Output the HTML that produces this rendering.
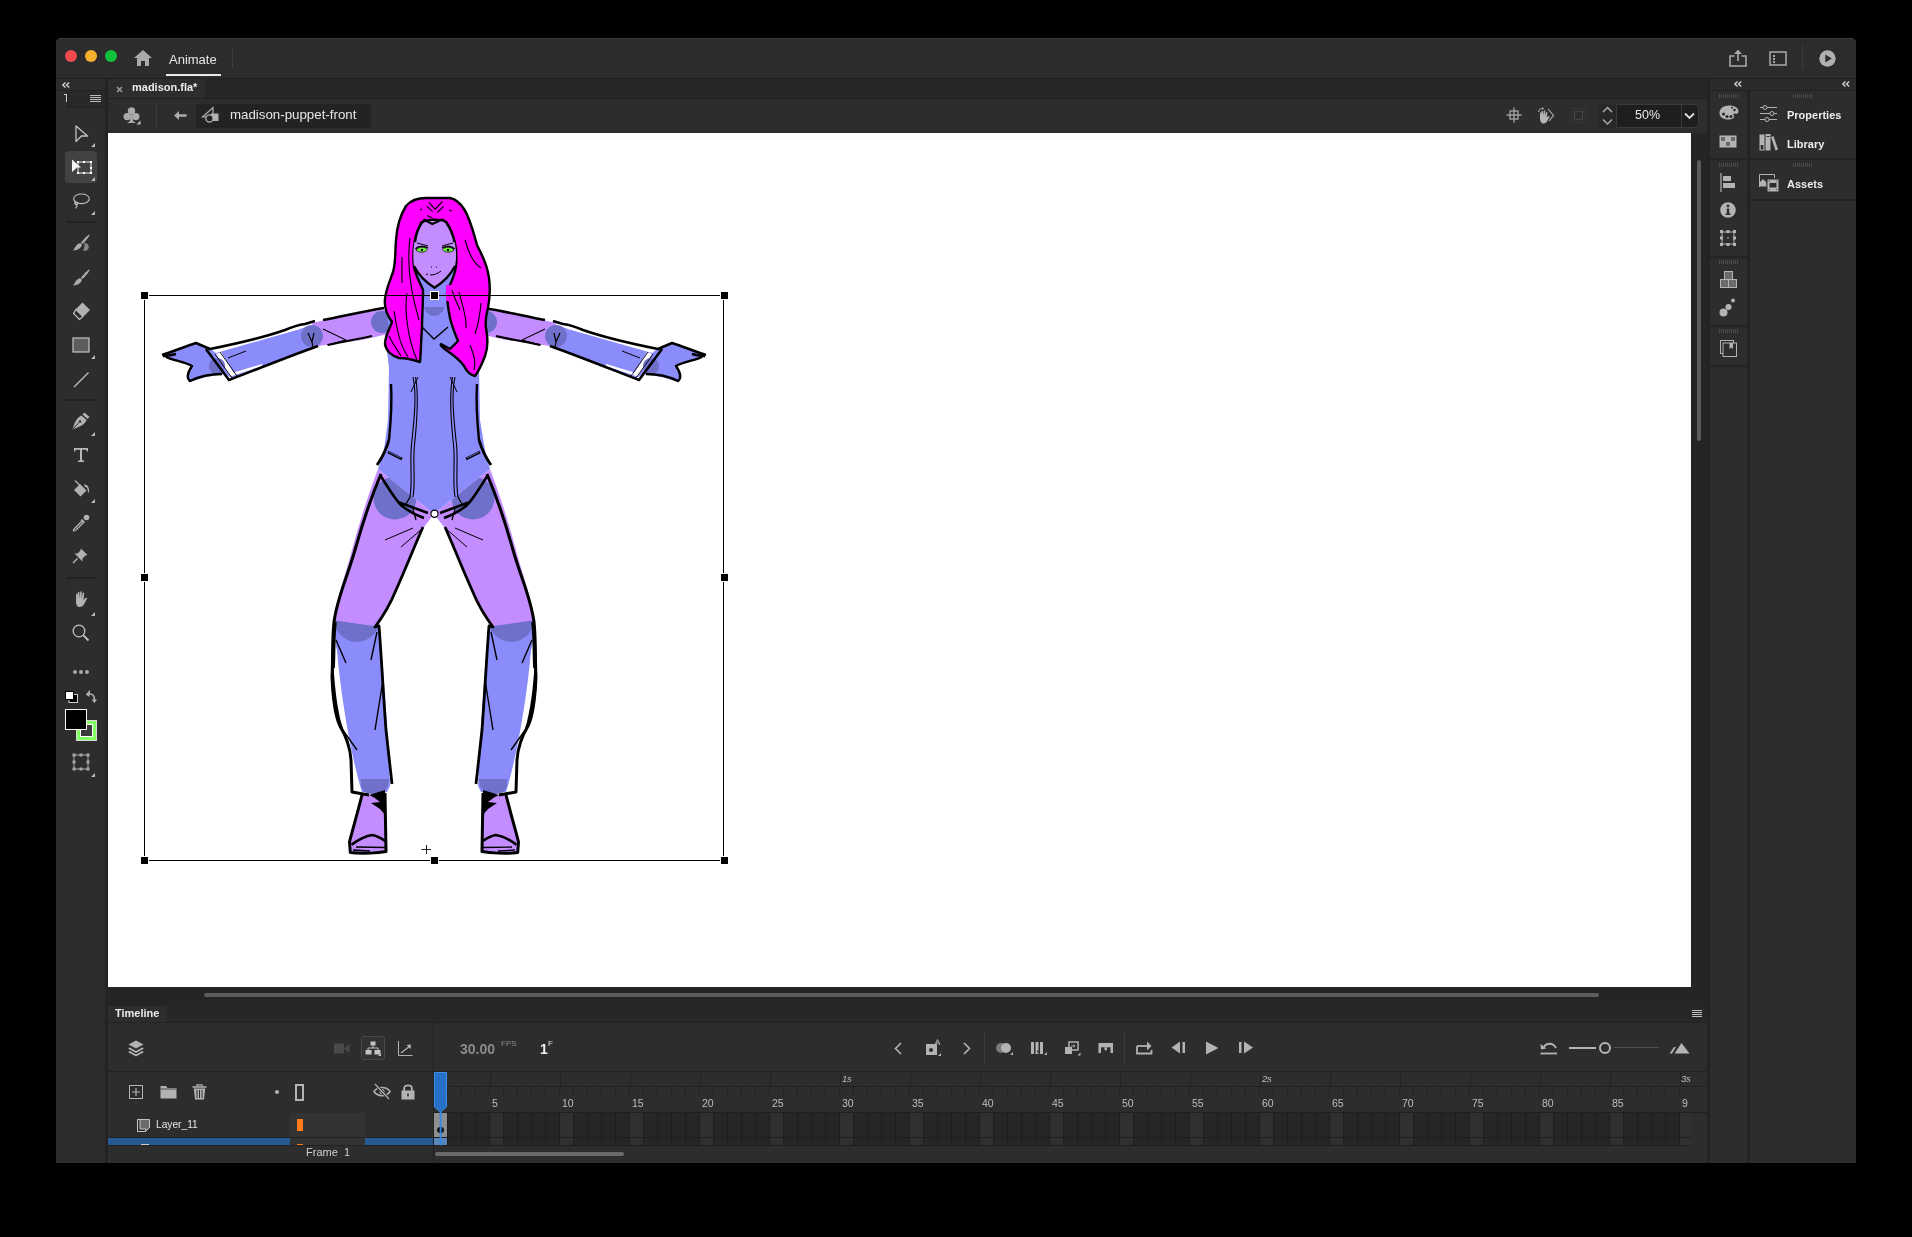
<!DOCTYPE html>
<html><head><meta charset="utf-8">
<style>
*{box-sizing:border-box;margin:0;padding:0}
html,body{width:1912px;height:1237px;background:#000;overflow:hidden;font-family:"Liberation Sans",sans-serif}
.a{position:absolute}
#win{position:absolute;left:56px;top:38px;width:1800px;height:1125px;background:#2d2d2d;border-radius:5px 5px 0 0;overflow:hidden;box-shadow:inset 0 1px 0 #3a3a3a}
.t{position:absolute;white-space:nowrap;line-height:1;will-change:transform}
svg{position:absolute;overflow:visible}
</style></head><body>
<div id="win">
  <!-- title bar -->
  <div class="a" style="left:0;top:1px;width:1800px;height:39px;background:#2c2c2c"></div>
  <div class="a" style="left:0;top:40px;width:1800px;height:1px;background:#1f1f1f"></div>
</div>
<!-- absolute layer in page coords -->
<div id="ui" class="a" style="left:0;top:0;width:1912px;height:1237px">
  <!-- traffic lights -->
  <div class="a" style="left:65px;top:50px;width:12px;height:12px;border-radius:50%;background:#ee4a4d"></div>
  <div class="a" style="left:85px;top:50px;width:12px;height:12px;border-radius:50%;background:#f5b02c"></div>
  <div class="a" style="left:105px;top:50px;width:12px;height:12px;border-radius:50%;background:#12c13b"></div>
  <!-- home -->
  <svg style="left:134px;top:50px" width="18" height="16" viewBox="0 0 18 16"><path d="M9 0 L18 8 L15 8 L15 16 L11 16 L11 11 L7 11 L7 16 L3 16 L3 8 L0 8 Z" fill="#a9a9a9"/></svg>
  <div class="t" style="left:169px;top:53px;font-size:13px;color:#e6e6e6">Animate</div>
  <div class="a" style="left:166px;top:74px;width:55px;height:2px;background:#e8e8e8"></div>
  <div class="a" style="left:232px;top:48px;width:1px;height:20px;background:#3e3e3e"></div>

  <!-- tools panel -->

  <!-- tools panel header -->
  <svg style="left:62px;top:82px" width="8" height="6" viewBox="0 0 8 6"><path d="M3.5 0.5 L0.8 3 L3.5 5.5 M7.2 0.5 L4.5 3 L7.2 5.5" stroke="#d6d6d6" stroke-width="1.3" fill="none"/></svg>
  <div class="a" style="left:56px;top:90px;width:49px;height:1px;background:#222"></div>
  <div class="a" style="left:67px;top:91px;width:38px;height:17px;background:#292929;border-left:1px solid #222;border-bottom:1px solid #222"></div>
  <div class="a" style="left:64px;top:94px;width:3px;height:1px;background:#d0d0d0"></div>
  <div class="a" style="left:66px;top:94px;width:1px;height:8px;background:#d0d0d0"></div>
  <svg style="left:90px;top:95px" width="11" height="8" viewBox="0 0 11 8"><path d="M0 0.5H11M0 2.5H11M0 4.5H11M0 6.5H11" stroke="#bdbdbd" stroke-width="1"/></svg>
  <!-- select tool -->
  <svg style="left:75px;top:125px" width="14" height="18" viewBox="0 0 14 18"><path d="M1 1 L12.5 11 L6.5 11 L1 16.5 Z" stroke="#c3c3c3" stroke-width="1.3" fill="none" stroke-linejoin="round"/></svg>
  <svg style="left:91px;top:143px" width="5" height="5" viewBox="0 0 5 5"><path d="M4 0 L4 4 L0 4 Z" fill="#bbb"/></svg>
  <!-- free transform selected -->
  <div class="a" style="left:65px;top:151px;width:32px;height:32px;background:#424242;border-radius:4px"></div>
  <svg style="left:71px;top:159px" width="22" height="16" viewBox="0 0 22 16"><path d="M7 3 H20 V14 H7 Z" stroke="#e8e8e8" stroke-width="1" fill="none"/><rect x="6" y="2" width="2" height="2" fill="#fff"/><rect x="12" y="2" width="2" height="2" fill="#fff"/><rect x="19" y="2" width="2" height="2" fill="#fff"/><rect x="19" y="8" width="2" height="2" fill="#fff"/><rect x="19" y="13" width="2" height="2" fill="#fff"/><rect x="12" y="13" width="2" height="2" fill="#fff"/><rect x="6" y="13" width="2" height="2" fill="#fff"/><path d="M1 0.5 L10 8.5 L6 8.5 L1 13 Z" fill="#f4f4f4"/></svg>
  <svg style="left:91px;top:177px" width="5" height="5" viewBox="0 0 5 5"><path d="M4 0 L4 4 L0 4 Z" fill="#bbb"/></svg>
  <!-- lasso -->
  <svg style="left:72px;top:193px" width="18" height="17" viewBox="0 0 18 17"><ellipse cx="9.5" cy="5.8" rx="7.8" ry="4.8" stroke="#c0c0c0" stroke-width="1.1" fill="none"/><path d="M4 8 C2 9 2.5 12 5 11.5 C6.5 11 6 9 4.5 9.5 C3.5 10 4 12 5 13 L3.5 15.5" stroke="#c0c0c0" stroke-width="1.1" fill="none"/></svg>
  <svg style="left:91px;top:211px" width="5" height="5" viewBox="0 0 5 5"><path d="M4 0 L4 4 L0 4 Z" fill="#bbb"/></svg>
  <div class="a" style="left:66px;top:221px;width:30px;height:2px;background:#212121"></div>
  <!-- brush with fill -->
  <svg style="left:73px;top:234px" width="18" height="18" viewBox="0 0 18 18"><path d="M16.5 0.5 C17.5 1 12 8 9.5 10 L8 8.5 C10 6 15.5 0 16.5 0.5Z" fill="#ababab"/><path d="M7.3 9 L9 10.8 C8 14 5 16.5 0 16.5 C2 15 2 10.5 7.3 9Z" fill="#ababab"/><path d="M11 9 A4 4 0 1 1 10 16.5 C11.5 14 12 11 11 9Z" fill="#858585"/></svg>
  <!-- paint brush -->
  <svg style="left:73px;top:269px" width="18" height="17" viewBox="0 0 18 17"><path d="M16.5 0.5 C17.5 1 12 8 9.5 10 L8 8.5 C10 6 15.5 0 16.5 0.5Z" fill="#ababab"/><path d="M7.3 9 L9 10.8 C8 14 5 16.5 0 16.5 C2 15 2 10.5 7.3 9Z" fill="#ababab"/></svg>
  <!-- eraser -->
  <svg style="left:73px;top:302px" width="18" height="18" viewBox="0 0 18 18"><path d="M9.5 0.5 L17 8 L10.5 14.5 L3 7 Z" fill="#b1b1b1"/><path d="M3 7.5 L10 14.5 L6.5 17.5 L0.5 11.5 Z" stroke="#c8c8c8" stroke-width="1.1" fill="none"/></svg>
  <!-- rectangle -->
  <svg style="left:72px;top:337px" width="18" height="16" viewBox="0 0 18 16"><rect x="1" y="1" width="16" height="14" fill="#5d5d5d" stroke="#c4c4c4" stroke-width="1.2"/></svg>
  <svg style="left:91px;top:355px" width="5" height="5" viewBox="0 0 5 5"><path d="M4 0 L4 4 L0 4 Z" fill="#bbb"/></svg>
  <!-- line -->
  <svg style="left:73px;top:371px" width="17" height="17" viewBox="0 0 17 17"><path d="M1 16 L15.5 1.5" stroke="#b8b8b8" stroke-width="1.4"/></svg>
  <div class="a" style="left:66px;top:399px;width:30px;height:2px;background:#212121"></div>
  <!-- pen -->
  <svg style="left:72px;top:412px" width="18" height="18" viewBox="0 0 18 18"><path d="M12.5 0.5 L17.5 5 L15.5 7 L10.5 2.5Z" fill="#b1b1b1"/><path d="M9.5 3.5 L14.5 8 C13 12 10 14 0.5 17.5 C3 8.5 5.5 5.5 9.5 3.5Z" fill="#b1b1b1"/><path d="M1 17 L7 10.5" stroke="#2d2d2d" stroke-width="1"/><circle cx="8" cy="9.5" r="1.2" fill="#2d2d2d"/></svg>
  <svg style="left:91px;top:432px" width="5" height="5" viewBox="0 0 5 5"><path d="M4 0 L4 4 L0 4 Z" fill="#bbb"/></svg>
  <!-- text -->
  <svg style="left:73px;top:447px" width="16" height="16" viewBox="0 0 16 16"><path d="M1 1 H15 V4.5 H13.5 V2.7 H9 V13.5 H11 V15 H5 V13.5 H7 V2.7 H2.5 V4.5 H1 Z" fill="#b8b8b8"/></svg>
  <!-- bucket -->
  <svg style="left:72px;top:480px" width="19" height="18" viewBox="0 0 19 18"><path d="M8 4 L14.5 10.5 L8.5 16.5 L2 10 Z" fill="#b1b1b1"/><path d="M3 0.5 L9 6.5" stroke="#b1b1b1" stroke-width="1.2"/><path d="M12 4.5 C16 4 17.5 8 17 12.5 L16 12.5 C16 9 15 7 13 7" fill="#b1b1b1"/></svg>
  <svg style="left:91px;top:499px" width="5" height="5" viewBox="0 0 5 5"><path d="M4 0 L4 4 L0 4 Z" fill="#bbb"/></svg>
  <!-- eyedropper -->
  <svg style="left:72px;top:514px" width="18" height="18" viewBox="0 0 18 18"><circle cx="14.5" cy="3.5" r="2.8" fill="#b1b1b1"/><path d="M10 5 L13 8 L11.5 9.5 L8.5 6.5Z" fill="#b1b1b1"/><path d="M9.5 7.5 L3 14 C1.5 15.5 1 16.8 1.8 17 C2.5 17.3 3.6 16.5 4.5 15.5 L11 9" stroke="#c0c0c0" stroke-width="1.1" fill="none"/></svg>
  <!-- pin -->
  <svg style="left:72px;top:548px" width="16" height="16" viewBox="0 0 16 16"><path d="M9 0.5 L15.5 7 L13.5 7.5 L10.5 10.5 L10.5 13.5 L2.5 5.5 L5.5 5.5 L8.5 2.5 Z" fill="#b1b1b1"/><path d="M1 15 L5.5 10.5" stroke="#b1b1b1" stroke-width="1.5"/></svg>
  <div class="a" style="left:66px;top:577px;width:30px;height:2px;background:#212121"></div>
  <!-- hand -->
  <svg style="left:72px;top:591px" width="17" height="17" viewBox="0 0 17 17"><path d="M4 9 L4 3.5 C4 2.5 5.5 2.5 5.5 3.5 L5.5 7.5 L5.8 1.5 C5.8 0.4 7.4 0.4 7.4 1.5 L7.6 7.3 L8.2 1 C8.3 -0.1 9.9 0 9.8 1.1 L9.6 7.4 L10.6 2.3 C10.9 1.2 12.3 1.5 12.2 2.6 L11.5 9.3 C12.5 8 13.5 6.5 14.5 6.8 C15.5 7.2 15 8 14.2 9.2 C12.5 12 11.5 16 7.5 16 C4.5 16 4 13 4 9Z" fill="#b1b1b1"/></svg>
  <svg style="left:91px;top:612px" width="5" height="5" viewBox="0 0 5 5"><path d="M4 0 L4 4 L0 4 Z" fill="#bbb"/></svg>
  <!-- zoom -->
  <svg style="left:72px;top:624px" width="18" height="18" viewBox="0 0 18 18"><circle cx="7" cy="7" r="5.8" stroke="#c0c0c0" stroke-width="1.3" fill="none"/><path d="M11.2 11.2 L16.5 16.5" stroke="#c0c0c0" stroke-width="1.8"/></svg>
  <!-- more -->
  <svg style="left:72px;top:669px" width="18" height="6" viewBox="0 0 18 6"><circle cx="3" cy="3" r="2" fill="#a8a8a8"/><circle cx="9" cy="3" r="2" fill="#a8a8a8"/><circle cx="15" cy="3" r="2" fill="#a8a8a8"/></svg>
  <!-- default colors / swap -->
  <svg style="left:65px;top:691px" width="13" height="12" viewBox="0 0 13 12"><rect x="0.5" y="0.5" width="8" height="8" fill="#fff" stroke="#bbb" stroke-width="1"/><rect x="4" y="3.5" width="8.5" height="8" fill="#000" stroke="#ccc" stroke-width="1"/><rect x="0.5" y="0.5" width="8" height="8" fill="#fff" stroke="#000" stroke-width="1"/></svg>
  <svg style="left:85px;top:691px" width="12" height="13" viewBox="0 0 12 13"><path d="M1.5 4 L4 1 L4 2.8 C8 2.8 9.5 5 9.5 9" stroke="#b1b1b1" stroke-width="1.6" fill="none"/><path d="M1 3.5 L4.5 0.5 L4.5 6Z" fill="#b1b1b1"/><path d="M6.5 8.5 L9.5 12 L12 8.5Z" fill="#b1b1b1"/></svg>
  <!-- fill & stroke -->
  <div class="a" style="left:76px;top:720px;width:21px;height:21px;background:#84ff62;border:1px solid #d8d8d8"></div>
  <div class="a" style="left:80px;top:724px;width:13px;height:13px;background:#3a3a3a;border:1px solid #fff"></div>
  <div class="a" style="left:65px;top:709px;width:22px;height:21px;background:#000;border:1.5px solid #f5f5f5"></div>
  <!-- transform dots -->
  <svg style="left:72px;top:753px" width="18" height="18" viewBox="0 0 18 18"><rect x="2" y="2" width="14" height="14" fill="none" stroke="#a8a8a8" stroke-width="1"/><g fill="#a8a8a8"><rect x="0.5" y="0.5" width="3" height="3"/><rect x="7.5" y="0.5" width="3" height="3"/><rect x="14.5" y="0.5" width="3" height="3"/><rect x="0.5" y="7.5" width="3" height="3"/><rect x="14.5" y="7.5" width="3" height="3"/><rect x="0.5" y="14.5" width="3" height="3"/><rect x="7.5" y="14.5" width="3" height="3"/><rect x="14.5" y="14.5" width="3" height="3"/></g></svg>
  <svg style="left:91px;top:773px" width="5" height="5" viewBox="0 0 5 5"><path d="M4 0 L4 4 L0 4 Z" fill="#bbb"/></svg>
  <div class="a" style="left:105px;top:79px;width:3px;height:1084px;background:#232323"></div>

  <!-- doc tab bar -->
  <div class="a" style="left:108px;top:79px;width:1599px;height:19px;background:#262626"></div>
  <div class="a" style="left:108px;top:79px;width:97px;height:19px;background:#2d2d2d"></div>
  <!-- breadcrumb bar -->
  <div class="a" style="left:108px;top:98px;width:1599px;height:35px;background:#2d2d2d"></div>
  <!-- pasteboard -->
  <div class="a" style="left:108px;top:133px;width:1601px;height:873px;background:#252525"></div>
  <div class="a" style="left:108px;top:133px;width:1583px;height:854px;background:#fff"></div>

  <!-- doc tab -->
  <div class="a" style="left:108px;top:98px;width:1599px;height:1px;background:#1f1f1f"></div>
  <svg style="left:116px;top:86px" width="7" height="7" viewBox="0 0 7 7"><path d="M1 1 L6 6 M6 1 L1 6" stroke="#9a9a9a" stroke-width="1.6"/></svg>
  <div class="t" style="left:132px;top:82px;font-size:11px;font-weight:bold;color:#ececec">madison.fla*</div>
  <!-- breadcrumb -->
  <svg style="left:123px;top:107px" width="19" height="18" viewBox="0 0 19 18"><circle cx="8.5" cy="4" r="3.7" fill="#ababab"/><circle cx="4.2" cy="9.6" r="3.7" fill="#ababab"/><circle cx="12.8" cy="9.6" r="3.7" fill="#ababab"/><path d="M7.5 8 L9.5 8 L10 14 L13 16 L4 16 L7 14Z" fill="#ababab"/><path d="M17.5 13.5 L17.5 17.5 L13.5 17.5Z" fill="#bbb"/></svg>
  <div class="a" style="left:156px;top:105px;width:1px;height:22px;background:#3d3d3d"></div>
  <svg style="left:174px;top:111px" width="13" height="9" viewBox="0 0 13 9"><path d="M0 4.5 L5 0 L5 3.3 L12.5 3.3 L12.5 5.7 L5 5.7 L5 9Z" fill="#adadad"/></svg>
  <div class="a" style="left:196px;top:104px;width:175px;height:24px;background:#232323;border-radius:3px"></div>
  <svg style="left:202px;top:107px" width="17" height="17" viewBox="0 0 17 17"><path d="M11 0.5 L11 10 L0.5 10 Z" fill="none" stroke="#b3b3b3" stroke-width="1.2"/><rect x="9" y="6.5" width="7.5" height="7.5" fill="#b3b3b3"/><circle cx="7.5" cy="11.5" r="3.6" fill="#232323" stroke="#b3b3b3" stroke-width="1.3"/></svg>
  <div class="t" style="left:230px;top:108px;font-size:13.3px;color:#e6e6e6">madison-puppet-front</div>
  <!-- stage view controls -->
  <svg style="left:1506px;top:107px" width="16" height="16" viewBox="0 0 16 16"><path d="M8 0.5 V15.5 M0.5 8 H15.5" stroke="#a0a0a0" stroke-width="1.4"/><rect x="4" y="4" width="8" height="8" fill="none" stroke="#a0a0a0" stroke-width="1.4"/></svg>
  <svg style="left:1537px;top:107px" width="19" height="18" viewBox="0 0 19 18"><path d="M3 10 L3 6 C3 5 4.3 5 4.3 6 L4.3 8.5 L4.6 4.5 C4.6 3.5 6 3.5 6 4.5 L6.2 8.5 L6.8 4 C6.9 3 8.3 3.1 8.2 4.1 L8 8.6 L9 5.5 C9.3 4.6 10.5 4.9 10.4 5.8 L9.8 10.8 C10.6 9.8 11.5 8.8 12.3 9.1 C13 9.4 12.7 10 12 11 C10.7 13 9.8 16.5 6.5 16.5 C3.8 16.5 3 14 3 10Z" fill="#b5b5b5"/><path d="M11 2 L16.5 8.5 L12 14" stroke="#b5b5b5" stroke-width="1.1" fill="none"/><path d="M1.5 5 C2 2 4 1 6 1.5" stroke="#b5b5b5" stroke-width="1" fill="none"/><path d="M5.5 0 L7 1.7 L5 2.8Z" fill="#b5b5b5"/></svg>
  <svg style="left:1571px;top:108px" width="15" height="15" viewBox="0 0 15 15"><rect x="0.5" y="0.5" width="14" height="14" fill="none" stroke="#3e3e3e" stroke-width="1" stroke-dasharray="1 1"/><rect x="3.5" y="3.5" width="8" height="8" fill="none" stroke="#444" stroke-width="1.2"/></svg>
  <div class="a" style="left:1599px;top:104px;width:18px;height:24px;background:#282828;border-radius:3px 0 0 3px"></div>
  <svg style="left:1602px;top:106px" width="11" height="20" viewBox="0 0 11 20"><path d="M1 6 L5.5 1.5 L10 6 M1 13.5 L5.5 18 L10 13.5" stroke="#a9a9a9" stroke-width="1.5" fill="none"/></svg>
  <div class="a" style="left:1616px;top:104px;width:83px;height:24px;background:#1e1e1e;border:1px solid #3b3b3b;border-radius:0 4px 4px 0"></div>
  <div class="a" style="left:1681px;top:105px;width:1px;height:22px;background:#3b3b3b"></div>
  <div class="t" style="left:1635px;top:109px;font-size:12.5px;color:#e8e8e8">50%</div>
  <svg style="left:1684px;top:112px" width="11" height="8" viewBox="0 0 11 8"><path d="M1 1.5 L5.5 6 L10 1.5" stroke="#e0e0e0" stroke-width="1.8" fill="none"/></svg>
  <!-- stage scrollbars -->
  <div class="a" style="left:1697px;top:160px;width:4px;height:281px;background:#5c5c5c;border-radius:2px"></div>
  <div class="a" style="left:204px;top:993px;width:1395px;height:4px;background:#5c5c5c;border-radius:2px"></div>
<!--CHAR-->
<svg style="left:0;top:0" width="1912" height="1237" viewBox="0 0 1912 1237">
<path d="M414,250 L458,250 L456,300 L470,306 L484,309 L483,334 L479,368 L480,420 L485,450 L490,469 L434,514 L378,469 L384,450 L388,420 L389,368 L385,334 L385,309 L398,306 L414,300 Z" fill="#8a8cfb"/>
<g id="lf"><path d="M162,355 L180,348 L196,343 L209,350 L222,350 L300,329 L314,324 L320,346 L268,364 L232,378 L224,374 L206,377 L190,382 L188,376 L193,366 L176,360 L166,357 Z" fill="#8a8cfb"/><path d="M312,323 L343,316 L386,309 L388,334 L362,340 L318,346 Z" fill="#c48dff"/><path d="M212,350 L300,326 L300,329 L216,353 Z" fill="#fff"/><path d="M232,376 L262,366 L262,364 L232,373 Z" fill="#fff"/><path d="M216,354 L230,376 L235,375 L221,352 Z" fill="#fff"/><path d="M378,469 C370,490 360,520 352,550 C344,580 336,600 333,622 L377,628 C385,612 392,600 398,585 C408,560 418,535 424,527 L434,514 Z" fill="#c48dff"/><path d="M335,622 L379,626 C383,660 387,720 390,786 L387,792 L361,792 C352,760 340,700 336,660 Z" fill="#8a8cfb"/><path d="M334,640 L337,690 L352,760 L358,792 L362,792 C352,760 341,700 337,650 Z" fill="#fff"/><path d="M361,795 L384,795 L386,851 L349,853 C350,840 355,815 361,795 Z" fill="#c48dff"/></g><use href="#lf" transform="translate(868,0) scale(-1,1)"/>
<g id="ls"><clipPath id="armclip"><path d="M160,355 L196,342 L222,349 L314,323 L386,308 L390,335 L362,341 L232,377 L188,383 Z"/></clipPath><g clip-path="url(#armclip)"><circle cx="312" cy="336" r="11" fill="#6f70c9"/><circle cx="382" cy="322" r="11" fill="#6f70c9"/><circle cx="217" cy="366" r="8" fill="#6f70c9"/></g><clipPath id="hipclip"><path d="M378,469 L434,514 L420,540 L360,540 L360,470 Z"/></clipPath><g clip-path="url(#hipclip)"><circle cx="395" cy="498" r="21.5" fill="#6f70c9"/></g><path d="M333,620 L379,627 C372,640 360,644 350,641 C340,637 335,630 333,620 Z" fill="#6f70c9"/><path d="M360.7,779 L389.5,779 L387.5,787 C384,792 378,794 372,794 C366,794 362,791 361,786 Z" fill="#6f70c9"/></g><use href="#ls" transform="translate(868,0) scale(-1,1)"/>
<path d="M424,307 C428,319 440,319 445,307 Z" fill="#6f70c9"/>
<g id="ll"><path d="M162,355 C172,352 186,346 196,343 L210,349 C235,344 262,338 285,330 C292,327 298,325 305,324 L315,321 M323,320 C340,317 360,312 384,308" stroke="#000" stroke-width="2.6" fill="none" stroke-linejoin="round"/><path d="M163,356 C168,356 172,355 176,354 M166,357 C172,360 185,362 192,366 C188,372 186,378 190,381 C198,377 210,374 222,374" stroke="#000" stroke-width="2.4" fill="none" stroke-linejoin="round"/><path d="M206,349 L229,380 C255,370 290,356 318,346" stroke="#000" stroke-width="2.6" fill="none" stroke-linejoin="round"/><path d="M328,345 C345,341 360,339 372,336" stroke="#000" stroke-width="2.2" fill="none"/><path d="M215,354 L232,378 M220,352 L237,376" stroke="#000" stroke-width="0.9" fill="none"/><path d="M228,358 L246,351" stroke="#000" stroke-width="1" fill="none"/><path d="M308,333 L312,342 L314,333 M312,342 L313,347" stroke="#000" stroke-width="1.2" fill="none"/><path d="M323,329 L346,340 L327,345" stroke="#000" stroke-width="1.1" fill="none"/><path d="M381,474 C372,495 362,525 355,550 C347,578 337,598 334,622 C332,640 333,660 332,677 C333,700 336,718 340,726 C346,736 350,745 351,760 L352,792 L369,795" stroke="#000" stroke-width="3" fill="none" stroke-linejoin="round"/><path d="M333,660 L331,680 C332,700 335,716 339,724 L346,738 L341,722 C337,705 335,690 333,660 Z" fill="#000"/><path d="M335,622 C333,640 334,655 333,668" stroke="#000" stroke-width="3.6" fill="none"/><path d="M423,527 C415,545 405,570 396,590 C390,605 384,615 375,627 L379,626 C381,650 383,690 386,730 L392,784" stroke="#000" stroke-width="2.8" fill="none" stroke-linejoin="round"/><path d="M336,640 L346,663 M340,726 L357,750 M377,632 L371,660 M383,680 L375,730" stroke="#000" stroke-width="1.4" fill="none"/><path d="M362,795 C357,815 351,835 349.5,842 L350.3,852.5 C362,854 378,853 386,851.5 L385,793" stroke="#000" stroke-width="3" fill="none" stroke-linejoin="round"/><path d="M369,795 L385,790 L386,816 L380,809 L371,803 L380,802 L374,797.5 Z" fill="#000"/><path d="M351.6,844.6 C358,840 365,836 372.3,835 C378,836 382,839 385.2,841" stroke="#000" stroke-width="2.6" fill="none"/><path d="M356,847 L385,847.5 M353,850 L370,851" stroke="#000" stroke-width="1.3" fill="none"/><path d="M385,540 L413,528 M401,547 L423,528" stroke="#000" stroke-width="1" fill="none"/><path d="M389,440 C386,450 382,458 377,465" stroke="#000" stroke-width="2.8" fill="none"/><path d="M391,384 C392,400 391,420 389,440" stroke="#000" stroke-width="2.4" fill="none"/><path d="M388,452 L402,459" stroke="#000" stroke-width="2.6" fill="none"/><path d="M389,452 L401,458" stroke="#8a8cfb" stroke-width="0.7" fill="none"/><path d="M413,377 C417,395 414,420 412,440 C409,460 413,480 410,497 M415.5,377 C419,395 417,420 415,440 C412,460 416,480 413,497" stroke="#000" stroke-width="1.1" fill="none"/><path d="M418,377 L411,392" stroke="#000" stroke-width="1" fill="none"/><path d="M380,475 C388,487 395,500 402,506 C410,512 418,516 424,518 M398,502 L428,513" stroke="#000" stroke-width="2.6" fill="none"/><path d="M410,497 L406,504 M413,509 L416,520" stroke="#000" stroke-width="1.3" fill="none"/></g><use href="#ll" transform="translate(868,0) scale(-1,1)"/>
<path d="M421,326 L434,339 L448,327" stroke="#000" stroke-width="1.4" fill="none"/>
<path d="M399,358 C392,356 386,351 385,344 C385,336 390,328 392,322 C387,315 384,307 385,299 C386,289 390,281 393,272 C396,262 395,250 396,240 C397,226 401,214 406,206 C411,200 418,198 426,198 L450,198 C456,199 460,203 464,209 C469,217 473,230 477,245 C481,254 487,262 489,278 C491,292 489,302 488,308 C486,316 485,322 486,328 C488,338 488,348 485,356 C482,364 478,372 475,376 C470,375 466,370 464,366 C460,360 452,354 446,350 C442,347 440,345 441,344 L450,349 L458,341 C455,334 452,326 450,318 C448,308 447,300 447,292 C450,284 455,276 456,266 C457,254 456,246 454,240 C452,232 449,226 446,222 C440,219 430,219 423,222 C419,228 416,234 415,240 C413,250 413,258 414,267 C416,277 421,284 423,290 C423,305 422,318 422,328 C421,340 421,352 420,362 C414,360 406,358 399,358 Z" fill="#ff00ff" stroke="#000" stroke-width="2.4" stroke-linejoin="round"/>
<path d="M423,223 C428,221 440,221 446,222 C450,228 453,234 454,240 C456,248 457,256 455,266 C450,276 443,282 434.5,287 C426,282 419,276 414,267 C413,256 413,248 415,240 C417,234 419,228 423,223 Z" fill="#c48dff"/>
<path d="M414,266 C419,276 427,283 434.5,287.8 C442,283 450,276 455,266" stroke="#000" stroke-width="2.4" fill="none"/>
<path d="M420,224 L424.7,220 L432.3,224 L442,219.5 L446,222 M422,222 C418,228 416,234 415,242 M446,222 C450,228 453,234 454.5,242" stroke="#000" stroke-width="2.4" fill="none"/>
<path d="M416,250 C418,247 425,246 427.5,249.5 C425,253 419,253 416,250 Z" fill="#6dfa3c" stroke="#000" stroke-width="0.7"/>
<path d="M454,250 C452,247 445,246 442.5,249.5 C445,253 451,253 454,250 Z" fill="#6dfa3c" stroke="#000" stroke-width="0.7"/>
<circle cx="422" cy="250" r="1.2" fill="#000"/><circle cx="448" cy="250" r="1.2" fill="#000"/>
<path d="M415.5,249 C418,246 424,245.5 428,248 M454.5,249 C452,246 446,245.5 442,248" stroke="#000" stroke-width="1.3" fill="none"/>
<path d="M417,243 L428,246 M442,246 L453,243" stroke="#000" stroke-width="1" fill="none"/>
<path d="M426,274.5 L428,274 M430,275 C434,275 437,274 441,271 M431,267 L432,267 M436,267 L437,267" stroke="#000" stroke-width="1" fill="none"/>
<path d="M402,257 L402,283 M410,238 C407,260 410,290 419,320 M394,311 C397,330 400,345 408,357 M407,293 C404,310 408,340 417,360 M465,240 C470,258 476,265 481,268 M459,292 C463,308 467,318 466,328 M481,303 C480,315 478,325 475,334 M428.7,202.3 L435.2,209.2 L442.5,201.5 M426.8,206.3 L432.7,211.7 M443.6,206.3 L437.4,212.5 M427.2,215.4 L432.7,218.3 M420,209 L422,210 M449,210 L452,211 M452,290 C455,300 458,305 460,310 M389,336 C393,344 397,350 401,356 M470,345 C474,355 476,362 474,370" stroke="#000" stroke-width="1.1" fill="none"/>
<path d="M446,285 L451,285 L451,301 L446,301 Z" fill="#ff00ff"/>
<path d="M148,295.5 H430 M438,295.5 H720 M144.5,299 V573 M144.5,581 V856 M723.5,299 V573 M723.5,581 V856 M148,860.5 H430 M438,860.5 H720" stroke="#000" stroke-width="1"/>
<rect x="140" y="291" width="9" height="9" fill="#fff"/><rect x="141" y="292" width="7" height="7" fill="#000"/>
<rect x="430" y="291" width="9" height="9" fill="#fff"/><rect x="431" y="292" width="7" height="7" fill="#000"/>
<rect x="720" y="291" width="9" height="9" fill="#fff"/><rect x="721" y="292" width="7" height="7" fill="#000"/>
<rect x="140" y="573" width="9" height="9" fill="#fff"/><rect x="141" y="574" width="7" height="7" fill="#000"/>
<rect x="720" y="573" width="9" height="9" fill="#fff"/><rect x="721" y="574" width="7" height="7" fill="#000"/>
<rect x="140" y="856" width="9" height="9" fill="#fff"/><rect x="141" y="857" width="7" height="7" fill="#000"/>
<rect x="430" y="856" width="9" height="9" fill="#fff"/><rect x="431" y="857" width="7" height="7" fill="#000"/>
<rect x="720" y="856" width="9" height="9" fill="#fff"/><rect x="721" y="857" width="7" height="7" fill="#000"/>
<circle cx="434.5" cy="513.8" r="3.6" fill="#fff" stroke="#000" stroke-width="1.2"/>
<path d="M421.5,849.5 H431 M426.5,845 V854" stroke="#222" stroke-width="1"/>
</svg>
<!--/CHAR-->
  <!-- right separator -->
  <div class="a" style="left:1707px;top:79px;width:3px;height:1084px;background:#232323"></div>
  <div class="a" style="left:1747px;top:79px;width:3px;height:1084px;background:#232323"></div>


  <!-- title right icons -->
  <svg style="left:1729px;top:49px" width="18" height="18" viewBox="0 0 18 18"><path d="M5.5 7 H1 V17 H17 V7 H12.5" stroke="#a9a9a9" stroke-width="1.6" fill="none"/><path d="M9 1.5 V12" stroke="#a9a9a9" stroke-width="1.6"/><path d="M5 5 L9 0.8 L13 5Z" fill="#a9a9a9"/></svg>
  <svg style="left:1769px;top:51px" width="18" height="15" viewBox="0 0 18 15"><rect x="1" y="1" width="16" height="13" fill="none" stroke="#a9a9a9" stroke-width="1.5"/><rect x="4" y="4" width="2" height="2" fill="#a9a9a9"/><rect x="4" y="7" width="2" height="2" fill="#a9a9a9"/><rect x="4" y="10" width="2" height="2" fill="#a9a9a9"/></svg>
  <div class="a" style="left:1802px;top:45px;width:1px;height:24px;background:#3c3c3c"></div>
  <svg style="left:1819px;top:50px" width="17" height="17" viewBox="0 0 17 17"><circle cx="8.5" cy="8.5" r="8.2" fill="#b0b0b0"/><path d="M6.3 4.5 L12.8 8.5 L6.3 12.5Z" fill="#2c2c2c"/></svg>
  <!-- right dock -->
  <div class="a" style="left:1710px;top:79px;width:146px;height:12px;background:#2b2b2b"></div>
  <div class="a" style="left:1710px;top:90px;width:146px;height:1px;background:#222"></div>
  <svg style="left:1734px;top:81px" width="8" height="6" viewBox="0 0 8 6"><path d="M3.5 0.5 L0.8 3 L3.5 5.5 M7.2 0.5 L4.5 3 L7.2 5.5" stroke="#d6d6d6" stroke-width="1.3" fill="none"/></svg>
  <svg style="left:1842px;top:81px" width="8" height="6" viewBox="0 0 8 6"><path d="M3.5 0.5 L0.8 3 L3.5 5.5 M7.2 0.5 L4.5 3 L7.2 5.5" stroke="#d6d6d6" stroke-width="1.3" fill="none"/></svg>
  <!-- grips -->
  <svg style="left:1719px;top:94px" width="20" height="4" viewBox="0 0 20 4"><path d="M0.5 0V4M2.5 0V4M4.5 0V4M6.5 0V4M8.5 0V4M10.5 0V4M12.5 0V4M14.5 0V4M16.5 0V4M18.5 0V4" stroke="#4a4a4a" stroke-width="1"/></svg>
  <svg style="left:1793px;top:94px" width="20" height="4" viewBox="0 0 20 4"><path d="M0.5 0V4M2.5 0V4M4.5 0V4M6.5 0V4M8.5 0V4M10.5 0V4M12.5 0V4M14.5 0V4M16.5 0V4M18.5 0V4" stroke="#4a4a4a" stroke-width="1"/></svg>
  <svg style="left:1719px;top:163px" width="20" height="4" viewBox="0 0 20 4"><path d="M0.5 0V4M2.5 0V4M4.5 0V4M6.5 0V4M8.5 0V4M10.5 0V4M12.5 0V4M14.5 0V4M16.5 0V4M18.5 0V4" stroke="#4a4a4a" stroke-width="1"/></svg>
  <svg style="left:1793px;top:163px" width="20" height="4" viewBox="0 0 20 4"><path d="M0.5 0V4M2.5 0V4M4.5 0V4M6.5 0V4M8.5 0V4M10.5 0V4M12.5 0V4M14.5 0V4M16.5 0V4M18.5 0V4" stroke="#4a4a4a" stroke-width="1"/></svg>
  <svg style="left:1719px;top:260px" width="20" height="4" viewBox="0 0 20 4"><path d="M0.5 0V4M2.5 0V4M4.5 0V4M6.5 0V4M8.5 0V4M10.5 0V4M12.5 0V4M14.5 0V4M16.5 0V4M18.5 0V4" stroke="#4a4a4a" stroke-width="1"/></svg>
  <svg style="left:1719px;top:329px" width="20" height="4" viewBox="0 0 20 4"><path d="M0.5 0V4M2.5 0V4M4.5 0V4M6.5 0V4M8.5 0V4M10.5 0V4M12.5 0V4M14.5 0V4M16.5 0V4M18.5 0V4" stroke="#4a4a4a" stroke-width="1"/></svg>
  <!-- group separators -->
  <div class="a" style="left:1710px;top:158px;width:37px;height:2px;background:#232323"></div>
  <div class="a" style="left:1750px;top:158px;width:106px;height:2px;background:#232323"></div>
  <div class="a" style="left:1710px;top:256px;width:37px;height:2px;background:#232323"></div>
  <div class="a" style="left:1710px;top:325px;width:37px;height:2px;background:#232323"></div>
  <div class="a" style="left:1710px;top:365px;width:37px;height:2px;background:#232323"></div>
  <div class="a" style="left:1750px;top:199px;width:106px;height:2px;background:#232323"></div>
  <!-- dock icons -->
  <svg style="left:1719px;top:105px" width="20" height="15" viewBox="0 0 20 15"><path d="M10 0.5 C16 0.5 19.5 3 19.5 6.5 C19.5 9 17 9 16 8.5 C14.5 8 14 9.5 15 11 C16 13 13 14.5 9 14.5 C4 14.5 0.5 12 0.5 8 C0.5 3.5 4.5 0.5 10 0.5Z" fill="#b3b3b3"/><circle cx="4.5" cy="9" r="1.6" fill="#2d2d2d"/><circle cx="8" cy="11.5" r="1.6" fill="#2d2d2d"/><circle cx="12" cy="11.5" r="1.6" fill="#2d2d2d"/><circle cx="15.5" cy="5" r="1.3" fill="#2d2d2d"/><circle cx="13" cy="2.8" r="1" fill="#2d2d2d"/></svg>
  <svg style="left:1719px;top:135px" width="18" height="13" viewBox="0 0 18 13"><rect x="0.5" y="0.5" width="17" height="12" fill="#b3b3b3"/><rect x="2" y="2" width="4" height="4" fill="#6a6a6a"/><rect x="7" y="7" width="4" height="4" fill="#6a6a6a"/><rect x="12" y="2" width="4" height="4" fill="#6a6a6a"/></svg>
  <svg style="left:1720px;top:173px" width="16" height="19" viewBox="0 0 16 19"><path d="M1 0 V19" stroke="#b3b3b3" stroke-width="1.2"/><rect x="3" y="3" width="8" height="5" fill="#b3b3b3"/><rect x="3" y="10" width="12" height="5" fill="#b3b3b3"/></svg>
  <svg style="left:1720px;top:202px" width="16" height="16" viewBox="0 0 16 16"><circle cx="8" cy="8" r="7.8" fill="#b3b3b3"/><rect x="6.8" y="6.5" width="2.4" height="6.5" fill="#2d2d2d"/><rect x="5.6" y="11.5" width="4.8" height="1.5" fill="#2d2d2d"/><circle cx="8" cy="4" r="1.4" fill="#2d2d2d"/></svg>
  <svg style="left:1720px;top:230px" width="16" height="16" viewBox="0 0 16 16"><rect x="2" y="2" width="12" height="12" fill="none" stroke="#b3b3b3" stroke-width="1"/><g fill="#b3b3b3"><rect x="0" y="0" width="3" height="3"/><rect x="6.5" y="0" width="3" height="3"/><rect x="13" y="0" width="3" height="3"/><rect x="0" y="6.5" width="3" height="3"/><rect x="13" y="6.5" width="3" height="3"/><rect x="0" y="13" width="3" height="3"/><rect x="6.5" y="13" width="3" height="3"/><rect x="13" y="13" width="3" height="3"/><rect x="7.3" y="7.3" width="1.4" height="1.4"/></g></svg>
  <svg style="left:1720px;top:271px" width="17" height="17" viewBox="0 0 17 17"><rect x="4.5" y="0.5" width="8" height="8" fill="#6a6a6a" stroke="#b3b3b3" stroke-width="1"/><rect x="0.5" y="8.5" width="8" height="8" fill="#6a6a6a" stroke="#b3b3b3" stroke-width="1"/><rect x="8.5" y="8.5" width="8" height="8" fill="#6a6a6a" stroke="#b3b3b3" stroke-width="1"/></svg>
  <svg style="left:1719px;top:297px" width="18" height="20" viewBox="0 0 18 20"><circle cx="4.5" cy="15.5" r="4" fill="#b3b3b3"/><circle cx="9.5" cy="10" r="3" fill="#b3b3b3"/><circle cx="14" cy="3.5" r="2" fill="#b3b3b3"/></svg>
  <svg style="left:1720px;top:340px" width="17" height="17" viewBox="0 0 17 17"><rect x="0.5" y="0.5" width="13" height="13" fill="none" stroke="#b3b3b3" stroke-width="1"/><rect x="3" y="3" width="13.5" height="13.5" fill="#2d2d2d" stroke="#b3b3b3" stroke-width="1"/><path d="M9.5 3 H13 V9 L11.3 7.5 L9.5 9Z" fill="#b3b3b3"/></svg>
  <!-- properties panel items -->
  <svg style="left:1760px;top:105px" width="18" height="17" viewBox="0 0 18 17"><path d="M0 2.5 H17 M0 8.5 H17 M0 14.5 H17" stroke="#b3b3b3" stroke-width="1"/><circle cx="5" cy="2.5" r="2" fill="#2d2d2d" stroke="#b3b3b3" stroke-width="1"/><circle cx="12" cy="8.5" r="2" fill="#2d2d2d" stroke="#b3b3b3" stroke-width="1"/><circle cx="7" cy="14.5" r="2" fill="#2d2d2d" stroke="#b3b3b3" stroke-width="1"/></svg>
  <div class="t" style="left:1787px;top:110px;font-size:11px;font-weight:bold;color:#ececec">Properties</div>
  <svg style="left:1759px;top:134px" width="19" height="17" viewBox="0 0 19 17"><rect x="0.5" y="0.5" width="5" height="16" fill="#b3b3b3"/><rect x="1.7" y="11" width="2.6" height="4.5" fill="#2d2d2d"/><rect x="6.5" y="0" width="5" height="16.5" fill="#b3b3b3"/><path d="M7.5 2.5 H10.5" stroke="#2d2d2d" stroke-width="1"/><path d="M12 3 L14.5 2 L19 15.5 L16.5 16.5Z" fill="#b3b3b3"/></svg>
  <div class="t" style="left:1787px;top:139px;font-size:11px;font-weight:bold;color:#ececec">Library</div>
  <svg style="left:1759px;top:174px" width="20" height="18" viewBox="0 0 20 18"><path d="M0.5 13 V0.5 H15.5 V4" stroke="#b3b3b3" stroke-width="1" fill="none"/><path d="M1 12.5 L1 8 L4 5 L7 8 L7.5 12.5Z" fill="#b3b3b3"/><rect x="8.5" y="5.5" width="11" height="12" fill="#b3b3b3"/><rect x="10.5" y="9" width="7" height="4.5" fill="#2d2d2d"/><path d="M9.8 7 H10.8 M9.8 15.5 H10.8 M17.3 7 H18.3 M17.3 15.5 H18.3" stroke="#2d2d2d" stroke-width="1"/></svg>
  <div class="t" style="left:1787px;top:179px;font-size:11px;font-weight:bold;color:#ececec">Assets</div>
  <!-- timeline -->
  <div class="a" style="left:108px;top:1006px;width:1599px;height:157px;background:#2d2d2d"></div>
  <div class="a" style="left:167px;top:1006px;width:1540px;height:16px;background:#272727"></div>
  <div class="a" style="left:108px;top:1022px;width:1599px;height:1px;background:#222"></div>
  <div class="t" style="left:115px;top:1008px;font-size:11px;font-weight:bold;color:#ececec">Timeline</div>
  <svg style="left:1692px;top:1010px" width="10" height="8" viewBox="0 0 10 8"><path d="M0 0.5H10M0 2.5H10M0 4.5H10M0 6.5H10" stroke="#bdbdbd" stroke-width="1"/></svg>
  <div class="a" style="left:108px;top:1071px;width:1599px;height:1px;background:#222"></div>
  <div class="a" style="left:433px;top:1023px;width:1px;height:140px;background:#222"></div>
  <svg style="left:128px;top:1040px" width="16" height="17" viewBox="0 0 16 17"><path d="M8 0.5 L15.5 4.5 L8 8.5 L0.5 4.5Z" fill="#b3b3b3"/><path d="M0.8 8 L8 12 L15.2 8" stroke="#b3b3b3" stroke-width="1.8" fill="none"/><path d="M0.8 11.5 L8 15.5 L15.2 11.5" stroke="#b3b3b3" stroke-width="1.8" fill="none"/></svg>
  <svg style="left:334px;top:1043px" width="16" height="11" viewBox="0 0 16 11"><rect x="0" y="0.5" width="10" height="10" fill="#4a4a4a"/><path d="M10 5.5 L15.5 1 L15.5 10Z" fill="#4a4a4a"/></svg>
  <div class="a" style="left:361px;top:1036px;width:24px;height:24px;background:#313131;border:1px solid #4a4a4a;border-radius:3px"></div>
  <svg style="left:365px;top:1041px" width="17" height="15" viewBox="0 0 17 15"><rect x="5.5" y="0.5" width="5" height="4" fill="#c3c3c3"/><path d="M8 4.5 V7 M3 9 V7 H13 V9" stroke="#c3c3c3" stroke-width="1" fill="none"/><rect x="0.5" y="9" width="6" height="4.5" fill="#c3c3c3"/><rect x="9.5" y="9" width="6" height="4.5" fill="#c3c3c3"/><path d="M16 12 L16 15 L13 15Z" fill="#c3c3c3"/></svg>
  <svg style="left:398px;top:1041px" width="15" height="15" viewBox="0 0 15 15"><path d="M0.5 0 V14.5 H14.5" stroke="#b3b3b3" stroke-width="1" fill="none"/><path d="M3 12 L12 5" stroke="#b3b3b3" stroke-width="1.2"/><path d="M8.5 4 L13 3.5 L12.5 8Z" fill="#b3b3b3"/></svg>
  <div class="t" style="left:460px;top:1042px;font-size:14px;font-weight:bold;color:#8c8c8c">30.00</div>
  <div class="t" style="left:501px;top:1040px;font-size:8px;color:#8c8c8c">FPS</div>
  <div class="t" style="left:540px;top:1042px;font-size:14px;font-weight:bold;color:#f0f0f0">1</div>
  <div class="t" style="left:548px;top:1040px;font-size:8px;color:#e0e0e0">F</div>
  <svg style="left:893px;top:1042px" width="10" height="13" viewBox="0 0 10 13"><path d="M8 1 L2.5 6.5 L8 12" stroke="#b3b3b3" stroke-width="1.6" fill="none"/></svg>
  <svg style="left:925px;top:1039px" width="17" height="18" viewBox="0 0 17 18"><rect x="1" y="5" width="11" height="11" fill="#b3b3b3"/><circle cx="6" cy="11" r="2" fill="#2d2d2d"/><path d="M10 6 L12.5 0.5 L15 6 M11 4 H14" stroke="#b3b3b3" stroke-width="1" fill="none"/><path d="M16 14 L16 17 L13 17Z" fill="#b3b3b3"/></svg>
  <svg style="left:962px;top:1042px" width="10" height="13" viewBox="0 0 10 13"><path d="M2 1 L7.5 6.5 L2 12" stroke="#b3b3b3" stroke-width="1.6" fill="none"/></svg>
  <div class="a" style="left:984px;top:1032px;width:1px;height:32px;background:#3c3c3c"></div>
  <svg style="left:995px;top:1041px" width="19" height="15" viewBox="0 0 19 15"><circle cx="6" cy="7" r="5" fill="#7a7a7a"/><circle cx="11" cy="7" r="5" fill="#b3b3b3"/><path d="M18 11 L18 14 L15 14Z" fill="#b3b3b3"/></svg>
  <svg style="left:1030px;top:1041px" width="18" height="15" viewBox="0 0 18 15"><rect x="1" y="1" width="3" height="12" fill="#b3b3b3"/><rect x="5.5" y="1" width="3" height="12" fill="#b3b3b3"/><rect x="10" y="1" width="3" height="12" fill="#b3b3b3"/><rect x="7" y="9.5" width="1.6" height="2" fill="#2d2d2d"/><path d="M17 11 L17 14 L14 14Z" fill="#b3b3b3"/></svg>
  <svg style="left:1064px;top:1040px" width="17" height="16" viewBox="0 0 17 16"><rect x="1" y="7" width="7" height="7" fill="#b3b3b3"/><rect x="5" y="2" width="9" height="8" fill="none" stroke="#b3b3b3" stroke-width="1.5"/><path d="M7 6 H11 M9.5 4.5 L11 6 L9.5 7.5" stroke="#b3b3b3" stroke-width="1" fill="none"/><path d="M16.5 12.5 L16.5 15.5 L13.5 15.5Z" fill="#b3b3b3"/></svg>
  <svg style="left:1098px;top:1042px" width="16" height="12" viewBox="0 0 16 12"><rect x="0.5" y="1" width="14.5" height="10" fill="#b3b3b3"/><rect x="3" y="5.3" width="9.5" height="5.7" fill="#2d2d2d"/><rect x="6.5" y="5.3" width="2.5" height="3" fill="#b3b3b3"/></svg>
  <div class="a" style="left:1124px;top:1032px;width:1px;height:32px;background:#3c3c3c"></div>
  <svg style="left:1136px;top:1040px" width="17" height="15" viewBox="0 0 17 15"><path d="M1 6 V13.5 H15.5 V10" stroke="#b3b3b3" stroke-width="1.8" fill="none"/><path d="M1 6 H12" stroke="#b3b3b3" stroke-width="1.8"/><path d="M11 1.5 L15.5 6 L11 10.5Z" fill="#b3b3b3"/></svg>
  <svg style="left:1171px;top:1041px" width="16" height="13" viewBox="0 0 16 13"><path d="M9 0.5 L0.5 6.5 L9 12.5Z" fill="#b3b3b3"/><rect x="11.5" y="1" width="2.5" height="11" fill="#b3b3b3"/></svg>
  <svg style="left:1205px;top:1041px" width="14" height="14" viewBox="0 0 14 14"><path d="M1 0.5 L13.5 7 L1 13.5Z" fill="#b3b3b3"/></svg>
  <svg style="left:1238px;top:1041px" width="16" height="13" viewBox="0 0 16 13"><rect x="1" y="1" width="2.5" height="11" fill="#b3b3b3"/><path d="M6 0.5 L15 6.5 L6 12.5Z" fill="#b3b3b3"/></svg>
  <svg style="left:1540px;top:1041px" width="18" height="14" viewBox="0 0 18 14"><path d="M4 6 C6 2 13 1 16 7" stroke="#b3b3b3" stroke-width="1.8" fill="none"/><path d="M0.5 3 L1 8.5 L6.5 7.5Z" fill="#b3b3b3"/><path d="M0.5 12.5 H17" stroke="#b3b3b3" stroke-width="1.8"/></svg>
  <div class="a" style="left:1569px;top:1047px;width:27px;height:2px;background:#b3b3b3"></div>
  <div class="a" style="left:1614px;top:1047px;width:45px;height:1px;background:#505050"></div>
  <div class="a" style="left:1599px;top:1042px;width:12px;height:12px;border:2px solid #b3b3b3;border-radius:50%"></div>
  <svg style="left:1669px;top:1042px" width="21" height="12" viewBox="0 0 21 12"><path d="M0.5 11.5 L5 5 L7 5 L3 11.5Z" fill="#b3b3b3"/><path d="M5.5 11.5 L12.5 1 L20.5 11.5Z" fill="#b3b3b3"/></svg>
  <svg style="left:129px;top:1085px" width="14" height="14" viewBox="0 0 14 14"><rect x="0.5" y="0.5" width="13" height="13" fill="none" stroke="#b3b3b3" stroke-width="1"/><path d="M7 3 V11 M3 7 H11" stroke="#b3b3b3" stroke-width="1.2"/></svg>
  <svg style="left:160px;top:1085px" width="17" height="14" viewBox="0 0 17 14"><path d="M0.5 1 H6 L7.5 3 H16.5 V13.5 H0.5Z" fill="#b3b3b3"/><path d="M0.5 4 H16.5" stroke="#2d2d2d" stroke-width="0.8"/></svg>
  <svg style="left:192px;top:1084px" width="15" height="16" viewBox="0 0 15 16"><path d="M0.5 3 H14.5" stroke="#b3b3b3" stroke-width="1.5"/><path d="M5 2.5 V0.8 H10 V2.5" stroke="#b3b3b3" stroke-width="1.2" fill="none"/><path d="M1.8 4.5 H13.2 L12 15.5 H3Z" fill="#b3b3b3"/><path d="M5 6 V14 M7.5 6 V14 M10 6 V14" stroke="#2d2d2d" stroke-width="1"/></svg>
  <div class="a" style="left:275px;top:1090px;width:4px;height:4px;border-radius:50%;background:#b3b3b3"></div>
  <div class="a" style="left:295px;top:1084px;width:9px;height:17px;border:2px solid #b3b3b3"></div>
  <svg style="left:373px;top:1083px" width="18" height="17" viewBox="0 0 18 17"><path d="M1 8.5 C4.5 3 13.5 3 17 8.5 C13.5 14 4.5 14 1 8.5Z" stroke="#b3b3b3" stroke-width="1.5" fill="none"/><circle cx="9" cy="8.5" r="2.5" fill="#b3b3b3"/><path d="M2 1 L16 16" stroke="#2d2d2d" stroke-width="3"/><path d="M2 1 L16 16" stroke="#b3b3b3" stroke-width="1.2"/></svg>
  <svg style="left:401px;top:1083px" width="14" height="17" viewBox="0 0 14 17"><path d="M3.2 8 V5 C3.2 1.5 10.8 1.5 10.8 5 V8" stroke="#b3b3b3" stroke-width="1.8" fill="none"/><rect x="0.5" y="7.5" width="13" height="9" fill="#b3b3b3"/><rect x="6.2" y="10.5" width="1.6" height="3" fill="#2d2d2d"/></svg>
  <div class="a" style="left:434px;top:1086px;width:1273px;height:1px;background:#222"></div>
  <div class="a" style="left:434px;top:1112px;width:1273px;height:1px;background:#202020"></div>
  <div class="a" style="left:447px;top:1087px;width:1px;height:8px;background:#202020"></div>
  <div class="a" style="left:461px;top:1087px;width:1px;height:8px;background:#202020"></div>
  <div class="a" style="left:475px;top:1087px;width:1px;height:8px;background:#202020"></div>
  <div class="a" style="left:490px;top:1072px;width:1px;height:14px;background:#222"></div>
  <div class="a" style="left:489px;top:1087px;width:1px;height:8px;background:#202020"></div>
  <div class="a" style="left:503px;top:1087px;width:1px;height:8px;background:#202020"></div>
  <div class="a" style="left:517px;top:1087px;width:1px;height:8px;background:#202020"></div>
  <div class="a" style="left:531px;top:1087px;width:1px;height:8px;background:#202020"></div>
  <div class="a" style="left:545px;top:1087px;width:1px;height:8px;background:#202020"></div>
  <div class="a" style="left:560px;top:1072px;width:1px;height:14px;background:#222"></div>
  <div class="a" style="left:559px;top:1087px;width:1px;height:8px;background:#202020"></div>
  <div class="a" style="left:573px;top:1087px;width:1px;height:8px;background:#202020"></div>
  <div class="a" style="left:587px;top:1087px;width:1px;height:8px;background:#202020"></div>
  <div class="a" style="left:601px;top:1087px;width:1px;height:8px;background:#202020"></div>
  <div class="a" style="left:615px;top:1087px;width:1px;height:8px;background:#202020"></div>
  <div class="a" style="left:630px;top:1072px;width:1px;height:14px;background:#222"></div>
  <div class="a" style="left:629px;top:1087px;width:1px;height:8px;background:#202020"></div>
  <div class="a" style="left:643px;top:1087px;width:1px;height:8px;background:#202020"></div>
  <div class="a" style="left:657px;top:1087px;width:1px;height:8px;background:#202020"></div>
  <div class="a" style="left:671px;top:1087px;width:1px;height:8px;background:#202020"></div>
  <div class="a" style="left:685px;top:1087px;width:1px;height:8px;background:#202020"></div>
  <div class="a" style="left:700px;top:1072px;width:1px;height:14px;background:#222"></div>
  <div class="a" style="left:699px;top:1087px;width:1px;height:8px;background:#202020"></div>
  <div class="a" style="left:713px;top:1087px;width:1px;height:8px;background:#202020"></div>
  <div class="a" style="left:727px;top:1087px;width:1px;height:8px;background:#202020"></div>
  <div class="a" style="left:741px;top:1087px;width:1px;height:8px;background:#202020"></div>
  <div class="a" style="left:755px;top:1087px;width:1px;height:8px;background:#202020"></div>
  <div class="a" style="left:770px;top:1072px;width:1px;height:14px;background:#222"></div>
  <div class="a" style="left:769px;top:1087px;width:1px;height:8px;background:#202020"></div>
  <div class="a" style="left:783px;top:1087px;width:1px;height:8px;background:#202020"></div>
  <div class="a" style="left:797px;top:1087px;width:1px;height:8px;background:#202020"></div>
  <div class="a" style="left:811px;top:1087px;width:1px;height:8px;background:#202020"></div>
  <div class="a" style="left:825px;top:1087px;width:1px;height:8px;background:#202020"></div>
  <div class="a" style="left:840px;top:1072px;width:1px;height:14px;background:#222"></div>
  <div class="a" style="left:839px;top:1087px;width:1px;height:8px;background:#202020"></div>
  <div class="a" style="left:853px;top:1087px;width:1px;height:8px;background:#202020"></div>
  <div class="a" style="left:867px;top:1087px;width:1px;height:8px;background:#202020"></div>
  <div class="a" style="left:881px;top:1087px;width:1px;height:8px;background:#202020"></div>
  <div class="a" style="left:895px;top:1087px;width:1px;height:8px;background:#202020"></div>
  <div class="a" style="left:910px;top:1072px;width:1px;height:14px;background:#222"></div>
  <div class="a" style="left:909px;top:1087px;width:1px;height:8px;background:#202020"></div>
  <div class="a" style="left:923px;top:1087px;width:1px;height:8px;background:#202020"></div>
  <div class="a" style="left:937px;top:1087px;width:1px;height:8px;background:#202020"></div>
  <div class="a" style="left:951px;top:1087px;width:1px;height:8px;background:#202020"></div>
  <div class="a" style="left:965px;top:1087px;width:1px;height:8px;background:#202020"></div>
  <div class="a" style="left:980px;top:1072px;width:1px;height:14px;background:#222"></div>
  <div class="a" style="left:979px;top:1087px;width:1px;height:8px;background:#202020"></div>
  <div class="a" style="left:993px;top:1087px;width:1px;height:8px;background:#202020"></div>
  <div class="a" style="left:1007px;top:1087px;width:1px;height:8px;background:#202020"></div>
  <div class="a" style="left:1021px;top:1087px;width:1px;height:8px;background:#202020"></div>
  <div class="a" style="left:1035px;top:1087px;width:1px;height:8px;background:#202020"></div>
  <div class="a" style="left:1050px;top:1072px;width:1px;height:14px;background:#222"></div>
  <div class="a" style="left:1049px;top:1087px;width:1px;height:8px;background:#202020"></div>
  <div class="a" style="left:1063px;top:1087px;width:1px;height:8px;background:#202020"></div>
  <div class="a" style="left:1077px;top:1087px;width:1px;height:8px;background:#202020"></div>
  <div class="a" style="left:1091px;top:1087px;width:1px;height:8px;background:#202020"></div>
  <div class="a" style="left:1105px;top:1087px;width:1px;height:8px;background:#202020"></div>
  <div class="a" style="left:1120px;top:1072px;width:1px;height:14px;background:#222"></div>
  <div class="a" style="left:1119px;top:1087px;width:1px;height:8px;background:#202020"></div>
  <div class="a" style="left:1133px;top:1087px;width:1px;height:8px;background:#202020"></div>
  <div class="a" style="left:1147px;top:1087px;width:1px;height:8px;background:#202020"></div>
  <div class="a" style="left:1161px;top:1087px;width:1px;height:8px;background:#202020"></div>
  <div class="a" style="left:1175px;top:1087px;width:1px;height:8px;background:#202020"></div>
  <div class="a" style="left:1190px;top:1072px;width:1px;height:14px;background:#222"></div>
  <div class="a" style="left:1189px;top:1087px;width:1px;height:8px;background:#202020"></div>
  <div class="a" style="left:1203px;top:1087px;width:1px;height:8px;background:#202020"></div>
  <div class="a" style="left:1217px;top:1087px;width:1px;height:8px;background:#202020"></div>
  <div class="a" style="left:1231px;top:1087px;width:1px;height:8px;background:#202020"></div>
  <div class="a" style="left:1245px;top:1087px;width:1px;height:8px;background:#202020"></div>
  <div class="a" style="left:1260px;top:1072px;width:1px;height:14px;background:#222"></div>
  <div class="a" style="left:1259px;top:1087px;width:1px;height:8px;background:#202020"></div>
  <div class="a" style="left:1273px;top:1087px;width:1px;height:8px;background:#202020"></div>
  <div class="a" style="left:1287px;top:1087px;width:1px;height:8px;background:#202020"></div>
  <div class="a" style="left:1301px;top:1087px;width:1px;height:8px;background:#202020"></div>
  <div class="a" style="left:1315px;top:1087px;width:1px;height:8px;background:#202020"></div>
  <div class="a" style="left:1330px;top:1072px;width:1px;height:14px;background:#222"></div>
  <div class="a" style="left:1329px;top:1087px;width:1px;height:8px;background:#202020"></div>
  <div class="a" style="left:1343px;top:1087px;width:1px;height:8px;background:#202020"></div>
  <div class="a" style="left:1357px;top:1087px;width:1px;height:8px;background:#202020"></div>
  <div class="a" style="left:1371px;top:1087px;width:1px;height:8px;background:#202020"></div>
  <div class="a" style="left:1385px;top:1087px;width:1px;height:8px;background:#202020"></div>
  <div class="a" style="left:1400px;top:1072px;width:1px;height:14px;background:#222"></div>
  <div class="a" style="left:1399px;top:1087px;width:1px;height:8px;background:#202020"></div>
  <div class="a" style="left:1413px;top:1087px;width:1px;height:8px;background:#202020"></div>
  <div class="a" style="left:1427px;top:1087px;width:1px;height:8px;background:#202020"></div>
  <div class="a" style="left:1441px;top:1087px;width:1px;height:8px;background:#202020"></div>
  <div class="a" style="left:1455px;top:1087px;width:1px;height:8px;background:#202020"></div>
  <div class="a" style="left:1470px;top:1072px;width:1px;height:14px;background:#222"></div>
  <div class="a" style="left:1469px;top:1087px;width:1px;height:8px;background:#202020"></div>
  <div class="a" style="left:1483px;top:1087px;width:1px;height:8px;background:#202020"></div>
  <div class="a" style="left:1497px;top:1087px;width:1px;height:8px;background:#202020"></div>
  <div class="a" style="left:1511px;top:1087px;width:1px;height:8px;background:#202020"></div>
  <div class="a" style="left:1525px;top:1087px;width:1px;height:8px;background:#202020"></div>
  <div class="a" style="left:1540px;top:1072px;width:1px;height:14px;background:#222"></div>
  <div class="a" style="left:1539px;top:1087px;width:1px;height:8px;background:#202020"></div>
  <div class="a" style="left:1553px;top:1087px;width:1px;height:8px;background:#202020"></div>
  <div class="a" style="left:1567px;top:1087px;width:1px;height:8px;background:#202020"></div>
  <div class="a" style="left:1581px;top:1087px;width:1px;height:8px;background:#202020"></div>
  <div class="a" style="left:1595px;top:1087px;width:1px;height:8px;background:#202020"></div>
  <div class="a" style="left:1610px;top:1072px;width:1px;height:14px;background:#222"></div>
  <div class="a" style="left:1609px;top:1087px;width:1px;height:8px;background:#202020"></div>
  <div class="a" style="left:1623px;top:1087px;width:1px;height:8px;background:#202020"></div>
  <div class="a" style="left:1637px;top:1087px;width:1px;height:8px;background:#202020"></div>
  <div class="a" style="left:1651px;top:1087px;width:1px;height:8px;background:#202020"></div>
  <div class="a" style="left:1665px;top:1087px;width:1px;height:8px;background:#202020"></div>
  <div class="a" style="left:1680px;top:1072px;width:1px;height:14px;background:#222"></div>
  <div class="a" style="left:1679px;top:1087px;width:1px;height:8px;background:#202020"></div>
  <div class="t" style="left:491.5px;top:1098px;font-size:10.5px;color:#bdbdbd">5</div>
  <div class="t" style="left:561.5px;top:1098px;font-size:10.5px;color:#bdbdbd">10</div>
  <div class="t" style="left:631.5px;top:1098px;font-size:10.5px;color:#bdbdbd">15</div>
  <div class="t" style="left:701.5px;top:1098px;font-size:10.5px;color:#bdbdbd">20</div>
  <div class="t" style="left:771.5px;top:1098px;font-size:10.5px;color:#bdbdbd">25</div>
  <div class="t" style="left:841.5px;top:1098px;font-size:10.5px;color:#bdbdbd">30</div>
  <div class="t" style="left:911.5px;top:1098px;font-size:10.5px;color:#bdbdbd">35</div>
  <div class="t" style="left:981.5px;top:1098px;font-size:10.5px;color:#bdbdbd">40</div>
  <div class="t" style="left:1051.5px;top:1098px;font-size:10.5px;color:#bdbdbd">45</div>
  <div class="t" style="left:1121.5px;top:1098px;font-size:10.5px;color:#bdbdbd">50</div>
  <div class="t" style="left:1191.5px;top:1098px;font-size:10.5px;color:#bdbdbd">55</div>
  <div class="t" style="left:1261.5px;top:1098px;font-size:10.5px;color:#bdbdbd">60</div>
  <div class="t" style="left:1331.5px;top:1098px;font-size:10.5px;color:#bdbdbd">65</div>
  <div class="t" style="left:1401.5px;top:1098px;font-size:10.5px;color:#bdbdbd">70</div>
  <div class="t" style="left:1471.5px;top:1098px;font-size:10.5px;color:#bdbdbd">75</div>
  <div class="t" style="left:1541.5px;top:1098px;font-size:10.5px;color:#bdbdbd">80</div>
  <div class="t" style="left:1611.5px;top:1098px;font-size:10.5px;color:#bdbdbd">85</div>
  <div class="t" style="left:1681.5px;top:1098px;font-size:10.5px;color:#bdbdbd">9</div>
  <div class="t" style="left:842px;top:1074px;font-size:9.5px;font-style:italic;color:#bdbdbd;letter-spacing:-0.3px">1s</div>
  <div class="t" style="left:1262px;top:1074px;font-size:9.5px;font-style:italic;color:#bdbdbd;letter-spacing:-0.3px">2s</div>
  <div class="t" style="left:1681px;top:1074px;font-size:9.5px;font-style:italic;color:#bdbdbd;letter-spacing:-0.3px">3s</div>
  <div class="a" style="left:434px;top:1113px;width:1257px;height:33px;background:#262626"></div>
  <div class="a" style="left:447px;top:1113px;width:1px;height:32px;background:#1e1e1e"></div>
  <div class="a" style="left:461px;top:1113px;width:1px;height:32px;background:#1e1e1e"></div>
  <div class="a" style="left:475px;top:1113px;width:1px;height:32px;background:#1e1e1e"></div>
  <div class="a" style="left:489px;top:1113px;width:1px;height:32px;background:#1e1e1e"></div>
  <div class="a" style="left:490px;top:1113px;width:13px;height:32px;background:#303030"></div>
  <div class="a" style="left:503px;top:1113px;width:1px;height:32px;background:#1e1e1e"></div>
  <div class="a" style="left:517px;top:1113px;width:1px;height:32px;background:#1e1e1e"></div>
  <div class="a" style="left:531px;top:1113px;width:1px;height:32px;background:#1e1e1e"></div>
  <div class="a" style="left:545px;top:1113px;width:1px;height:32px;background:#1e1e1e"></div>
  <div class="a" style="left:559px;top:1113px;width:1px;height:32px;background:#1e1e1e"></div>
  <div class="a" style="left:560px;top:1113px;width:13px;height:32px;background:#303030"></div>
  <div class="a" style="left:573px;top:1113px;width:1px;height:32px;background:#1e1e1e"></div>
  <div class="a" style="left:587px;top:1113px;width:1px;height:32px;background:#1e1e1e"></div>
  <div class="a" style="left:601px;top:1113px;width:1px;height:32px;background:#1e1e1e"></div>
  <div class="a" style="left:615px;top:1113px;width:1px;height:32px;background:#1e1e1e"></div>
  <div class="a" style="left:629px;top:1113px;width:1px;height:32px;background:#1e1e1e"></div>
  <div class="a" style="left:630px;top:1113px;width:13px;height:32px;background:#303030"></div>
  <div class="a" style="left:643px;top:1113px;width:1px;height:32px;background:#1e1e1e"></div>
  <div class="a" style="left:657px;top:1113px;width:1px;height:32px;background:#1e1e1e"></div>
  <div class="a" style="left:671px;top:1113px;width:1px;height:32px;background:#1e1e1e"></div>
  <div class="a" style="left:685px;top:1113px;width:1px;height:32px;background:#1e1e1e"></div>
  <div class="a" style="left:699px;top:1113px;width:1px;height:32px;background:#1e1e1e"></div>
  <div class="a" style="left:700px;top:1113px;width:13px;height:32px;background:#303030"></div>
  <div class="a" style="left:713px;top:1113px;width:1px;height:32px;background:#1e1e1e"></div>
  <div class="a" style="left:727px;top:1113px;width:1px;height:32px;background:#1e1e1e"></div>
  <div class="a" style="left:741px;top:1113px;width:1px;height:32px;background:#1e1e1e"></div>
  <div class="a" style="left:755px;top:1113px;width:1px;height:32px;background:#1e1e1e"></div>
  <div class="a" style="left:769px;top:1113px;width:1px;height:32px;background:#1e1e1e"></div>
  <div class="a" style="left:770px;top:1113px;width:13px;height:32px;background:#303030"></div>
  <div class="a" style="left:783px;top:1113px;width:1px;height:32px;background:#1e1e1e"></div>
  <div class="a" style="left:797px;top:1113px;width:1px;height:32px;background:#1e1e1e"></div>
  <div class="a" style="left:811px;top:1113px;width:1px;height:32px;background:#1e1e1e"></div>
  <div class="a" style="left:825px;top:1113px;width:1px;height:32px;background:#1e1e1e"></div>
  <div class="a" style="left:839px;top:1113px;width:1px;height:32px;background:#1e1e1e"></div>
  <div class="a" style="left:840px;top:1113px;width:13px;height:32px;background:#303030"></div>
  <div class="a" style="left:853px;top:1113px;width:1px;height:32px;background:#1e1e1e"></div>
  <div class="a" style="left:867px;top:1113px;width:1px;height:32px;background:#1e1e1e"></div>
  <div class="a" style="left:881px;top:1113px;width:1px;height:32px;background:#1e1e1e"></div>
  <div class="a" style="left:895px;top:1113px;width:1px;height:32px;background:#1e1e1e"></div>
  <div class="a" style="left:909px;top:1113px;width:1px;height:32px;background:#1e1e1e"></div>
  <div class="a" style="left:910px;top:1113px;width:13px;height:32px;background:#303030"></div>
  <div class="a" style="left:923px;top:1113px;width:1px;height:32px;background:#1e1e1e"></div>
  <div class="a" style="left:937px;top:1113px;width:1px;height:32px;background:#1e1e1e"></div>
  <div class="a" style="left:951px;top:1113px;width:1px;height:32px;background:#1e1e1e"></div>
  <div class="a" style="left:965px;top:1113px;width:1px;height:32px;background:#1e1e1e"></div>
  <div class="a" style="left:979px;top:1113px;width:1px;height:32px;background:#1e1e1e"></div>
  <div class="a" style="left:980px;top:1113px;width:13px;height:32px;background:#303030"></div>
  <div class="a" style="left:993px;top:1113px;width:1px;height:32px;background:#1e1e1e"></div>
  <div class="a" style="left:1007px;top:1113px;width:1px;height:32px;background:#1e1e1e"></div>
  <div class="a" style="left:1021px;top:1113px;width:1px;height:32px;background:#1e1e1e"></div>
  <div class="a" style="left:1035px;top:1113px;width:1px;height:32px;background:#1e1e1e"></div>
  <div class="a" style="left:1049px;top:1113px;width:1px;height:32px;background:#1e1e1e"></div>
  <div class="a" style="left:1050px;top:1113px;width:13px;height:32px;background:#303030"></div>
  <div class="a" style="left:1063px;top:1113px;width:1px;height:32px;background:#1e1e1e"></div>
  <div class="a" style="left:1077px;top:1113px;width:1px;height:32px;background:#1e1e1e"></div>
  <div class="a" style="left:1091px;top:1113px;width:1px;height:32px;background:#1e1e1e"></div>
  <div class="a" style="left:1105px;top:1113px;width:1px;height:32px;background:#1e1e1e"></div>
  <div class="a" style="left:1119px;top:1113px;width:1px;height:32px;background:#1e1e1e"></div>
  <div class="a" style="left:1120px;top:1113px;width:13px;height:32px;background:#303030"></div>
  <div class="a" style="left:1133px;top:1113px;width:1px;height:32px;background:#1e1e1e"></div>
  <div class="a" style="left:1147px;top:1113px;width:1px;height:32px;background:#1e1e1e"></div>
  <div class="a" style="left:1161px;top:1113px;width:1px;height:32px;background:#1e1e1e"></div>
  <div class="a" style="left:1175px;top:1113px;width:1px;height:32px;background:#1e1e1e"></div>
  <div class="a" style="left:1189px;top:1113px;width:1px;height:32px;background:#1e1e1e"></div>
  <div class="a" style="left:1190px;top:1113px;width:13px;height:32px;background:#303030"></div>
  <div class="a" style="left:1203px;top:1113px;width:1px;height:32px;background:#1e1e1e"></div>
  <div class="a" style="left:1217px;top:1113px;width:1px;height:32px;background:#1e1e1e"></div>
  <div class="a" style="left:1231px;top:1113px;width:1px;height:32px;background:#1e1e1e"></div>
  <div class="a" style="left:1245px;top:1113px;width:1px;height:32px;background:#1e1e1e"></div>
  <div class="a" style="left:1259px;top:1113px;width:1px;height:32px;background:#1e1e1e"></div>
  <div class="a" style="left:1260px;top:1113px;width:13px;height:32px;background:#303030"></div>
  <div class="a" style="left:1273px;top:1113px;width:1px;height:32px;background:#1e1e1e"></div>
  <div class="a" style="left:1287px;top:1113px;width:1px;height:32px;background:#1e1e1e"></div>
  <div class="a" style="left:1301px;top:1113px;width:1px;height:32px;background:#1e1e1e"></div>
  <div class="a" style="left:1315px;top:1113px;width:1px;height:32px;background:#1e1e1e"></div>
  <div class="a" style="left:1329px;top:1113px;width:1px;height:32px;background:#1e1e1e"></div>
  <div class="a" style="left:1330px;top:1113px;width:13px;height:32px;background:#303030"></div>
  <div class="a" style="left:1343px;top:1113px;width:1px;height:32px;background:#1e1e1e"></div>
  <div class="a" style="left:1357px;top:1113px;width:1px;height:32px;background:#1e1e1e"></div>
  <div class="a" style="left:1371px;top:1113px;width:1px;height:32px;background:#1e1e1e"></div>
  <div class="a" style="left:1385px;top:1113px;width:1px;height:32px;background:#1e1e1e"></div>
  <div class="a" style="left:1399px;top:1113px;width:1px;height:32px;background:#1e1e1e"></div>
  <div class="a" style="left:1400px;top:1113px;width:13px;height:32px;background:#303030"></div>
  <div class="a" style="left:1413px;top:1113px;width:1px;height:32px;background:#1e1e1e"></div>
  <div class="a" style="left:1427px;top:1113px;width:1px;height:32px;background:#1e1e1e"></div>
  <div class="a" style="left:1441px;top:1113px;width:1px;height:32px;background:#1e1e1e"></div>
  <div class="a" style="left:1455px;top:1113px;width:1px;height:32px;background:#1e1e1e"></div>
  <div class="a" style="left:1469px;top:1113px;width:1px;height:32px;background:#1e1e1e"></div>
  <div class="a" style="left:1470px;top:1113px;width:13px;height:32px;background:#303030"></div>
  <div class="a" style="left:1483px;top:1113px;width:1px;height:32px;background:#1e1e1e"></div>
  <div class="a" style="left:1497px;top:1113px;width:1px;height:32px;background:#1e1e1e"></div>
  <div class="a" style="left:1511px;top:1113px;width:1px;height:32px;background:#1e1e1e"></div>
  <div class="a" style="left:1525px;top:1113px;width:1px;height:32px;background:#1e1e1e"></div>
  <div class="a" style="left:1539px;top:1113px;width:1px;height:32px;background:#1e1e1e"></div>
  <div class="a" style="left:1540px;top:1113px;width:13px;height:32px;background:#303030"></div>
  <div class="a" style="left:1553px;top:1113px;width:1px;height:32px;background:#1e1e1e"></div>
  <div class="a" style="left:1567px;top:1113px;width:1px;height:32px;background:#1e1e1e"></div>
  <div class="a" style="left:1581px;top:1113px;width:1px;height:32px;background:#1e1e1e"></div>
  <div class="a" style="left:1595px;top:1113px;width:1px;height:32px;background:#1e1e1e"></div>
  <div class="a" style="left:1609px;top:1113px;width:1px;height:32px;background:#1e1e1e"></div>
  <div class="a" style="left:1610px;top:1113px;width:13px;height:32px;background:#303030"></div>
  <div class="a" style="left:1623px;top:1113px;width:1px;height:32px;background:#1e1e1e"></div>
  <div class="a" style="left:1637px;top:1113px;width:1px;height:32px;background:#1e1e1e"></div>
  <div class="a" style="left:1651px;top:1113px;width:1px;height:32px;background:#1e1e1e"></div>
  <div class="a" style="left:1665px;top:1113px;width:1px;height:32px;background:#1e1e1e"></div>
  <div class="a" style="left:1679px;top:1113px;width:1px;height:32px;background:#1e1e1e"></div>
  <div class="a" style="left:1680px;top:1113px;width:13px;height:32px;background:#303030"></div>
  <div class="a" style="left:1693px;top:1113px;width:1px;height:32px;background:#1e1e1e"></div>
  <div class="a" style="left:434px;top:1137px;width:1257px;height:1px;background:#1e1e1e"></div>
  <div class="a" style="left:434px;top:1145px;width:1257px;height:1px;background:#1e1e1e"></div>
  <div class="a" style="left:434px;top:1113px;width:13px;height:24px;background:#8f8f8f"></div>
  <div class="a" style="left:434px;top:1138px;width:13px;height:7px;background:#5a86b8"></div>
  <div class="a" style="left:437px;top:1127px;width:7px;height:6px;border-radius:50%;background:#111"></div>
  <div class="a" style="left:290px;top:1113px;width:75px;height:24px;background:#333"></div>
  <div class="a" style="left:108px;top:1137px;width:325px;height:1px;background:#222"></div>
  <div class="a" style="left:108px;top:1138px;width:182px;height:7px;background:#275a94"></div>
  <div class="a" style="left:290px;top:1138px;width:75px;height:7px;background:#333"></div>
  <div class="a" style="left:365px;top:1138px;width:68px;height:7px;background:#275a94"></div>
  <div class="a" style="left:108px;top:1145px;width:325px;height:1px;background:#222"></div>
  <svg style="left:137px;top:1119px" width="13" height="13" viewBox="0 0 13 13"><path d="M0.5 0.5 H12.5 V8.5 L8.5 12.5 H0.5Z" fill="#6a6a6a" stroke="#c3c3c3" stroke-width="1"/><path d="M0.5 0.5 H3 V10 H9 L8.5 12.5 H0.5Z" fill="#2d2d2d" stroke="#c3c3c3" stroke-width="1"/></svg>
  <div class="a" style="left:141px;top:1144px;width:8px;height:1px;background:#cfcfcf"></div>
  <div class="t" style="left:156px;top:1120px;font-size:10.2px;color:#e6e6e6">Layer_11</div>
  <div class="a" style="left:297px;top:1119px;width:6px;height:12px;background:#ff7b17"></div>
  <div class="a" style="left:297px;top:1144px;width:6px;height:1px;background:#ff7b17"></div>
  <div class="t" style="left:306px;top:1147px;font-size:11px;color:#cfcfcf">Frame&nbsp;&nbsp;1</div>
  <div class="a" style="left:435px;top:1152px;width:189px;height:4px;background:#6a6a6a;border-radius:2px"></div>
  <div class="a" style="left:1691px;top:1113px;width:16px;height:50px;background:#2d2d2d"></div>
  <svg style="left:433px;top:1071px" width="16" height="76" viewBox="0 0 16 76"><path d="M1.5 1.5 H13.5 V36 L7.5 41 L1.5 36 Z" fill="#2670c6" stroke="#3a8ff0" stroke-width="1"/><rect x="6.7" y="41" width="1.8" height="33.5" fill="#2f88ee"/></svg>
</div>
</body></html>
